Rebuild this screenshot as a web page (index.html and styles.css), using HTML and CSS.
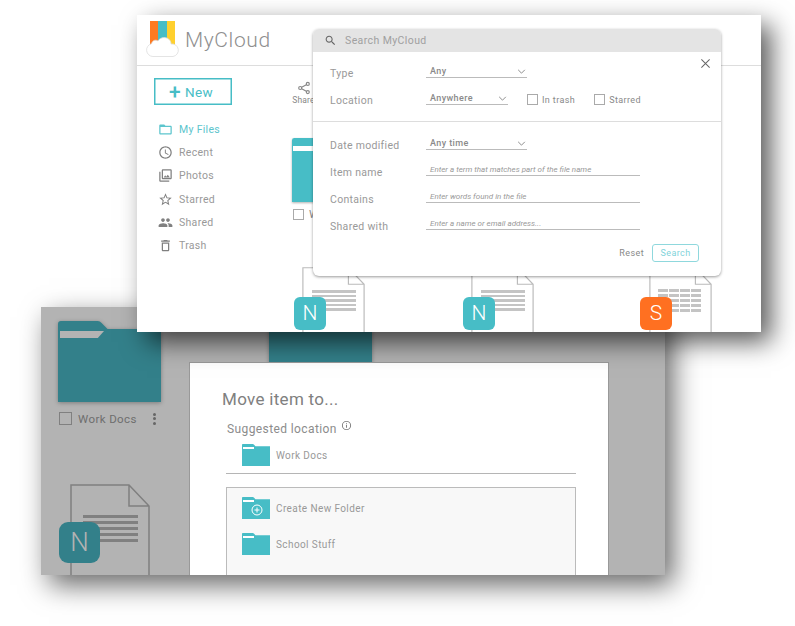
FILE: index.html
```html
<!DOCTYPE html>
<html lang="en">
<head>
  <meta charset="UTF-8">
  <title>MyCloud</title>
  <link rel="stylesheet" href="styles.css">
</head>
<body>

<svg class="defs" width="0" height="0">
  <symbol id="folder" viewBox="0 0 104 81" preserveAspectRatio="none">
    <path d="M0 3a3 3 0 0 1 3-3h36a6 6 0 0 1 5 2l6 6h54v73H0z" fill="currentColor"/>
  </symbol>
  <symbol id="doc" viewBox="0 0 80 130">
    <path d="M1 130V1h58l20 21v108M59 1v21h20" fill="none" stroke="currentColor" stroke-width="1.5"/>
  </symbol>
</svg>

<!-- back window: move dialog -->
<section class="window back">
  <div class="back-row">
    <div class="back-cell">
      <svg class="big-folder"><use href="#folder"/></svg>
      <span class="stripe"></span>
      <div class="back-caption">
        <span class="check"></span>
        <span>Work Docs</span>
        <span class="dots"><i></i><i></i><i></i></span>
      </div>
    </div>
    <div class="back-cell">
      <svg class="big-folder"><use href="#folder"/></svg>
    </div>
  </div>
  <div class="back-file">
    <svg class="doc"><use href="#doc"/></svg>
    <div class="lines"><i></i><i></i><i></i><i></i><i></i></div>
    <span class="badge">N</span>
  </div>

  <div class="modal">
    <h2>Move item to...</h2>
    <div class="suggested">
      Suggested location
      <svg class="info" viewBox="0 0 24 24"><path d="M11 7h2v2h-2zm0 4h2v6h-2zm1-9a10 10 0 1 0 0 20 10 10 0 0 0 0-20zm0 18a8 8 0 1 1 0-16 8 8 0 0 1 0 16z"/></svg>
    </div>
    <div class="loc-row first-loc">
      <span class="mini"><svg><use href="#folder"/></svg><span class="mini-stripe"></span></span>
      Work Docs
    </div>
    <div class="loc-box">
      <div class="loc-row">
        <span class="mini">
          <svg><use href="#folder"/></svg><span class="mini-stripe"></span>
          <svg class="plus" viewBox="0 0 24 24"><circle cx="12" cy="12" r="10" fill="none" stroke="#fff" stroke-width="2"/><path d="M12 7v10M7 12h10" stroke="#fff" stroke-width="2"/></svg>
        </span>
        Create New Folder
      </div>
      <div class="loc-row">
        <span class="mini"><svg><use href="#folder"/></svg><span class="mini-stripe"></span></span>
        School Stuff
      </div>
    </div>
  </div>
</section>

<!-- front window: file list with search -->
<section class="window front">
  <header class="topbar">
    <div class="logo">
      <span class="band orange"></span><span class="band teal"></span><span class="band yellow"></span>
      <svg class="cloud" viewBox="0 0 34 21"><path d="M7 20.500a6.500 6.500 0 0 1-1.500-12.800C6.500 4 10 3.500 12 5c2-4 9-5 12-.5 1 1.500 1 3 1 3.500a6.300 6.300 0 0 1 2 12.500z" fill="#fff" stroke="#ddd" stroke-width=".8"/></svg>
    </div>
    <span class="brand">MyCloud</span>
  </header>

  <div class="content">
    <aside class="sidebar">
      <button class="new-btn"><span class="new-plus">+</span> New</button>
      <nav class="nav">
        <a class="active"><svg viewBox="0 0 24 24"><path d="M20 6h-8l-2-2H4c-1.100 0-2 .9-2 2v12c0 1.100.9 2 2 2h16c1.100 0 2-.9 2-2V8c0-1.100-.9-2-2-2zm0 12H4V8h16v10z"/></svg>My Files</a>
        <a><svg viewBox="0 0 24 24"><path d="M11.990 2C6.470 2 2 6.480 2 12s4.470 10 9.990 10C17.520 22 22 17.520 22 12S17.520 2 11.990 2zM12 20c-4.420 0-8-3.580-8-8s3.580-8 8-8 8 3.580 8 8-3.580 8-8 8zm.5-13H11v6l5.250 3.150.75-1.230-4.500-2.670z"/></svg>Recent</a>
        <a><svg viewBox="0 0 24 24"><path d="M20 4v12H8V4h12m0-2H8c-1.100 0-2 .9-2 2v12c0 1.100.9 2 2 2h12c1.100 0 2-.9 2-2V4c0-1.100-.9-2-2-2zm-8.500 9.670l1.690 2.260 2.480-3.100L19 15H9zM2 6v14c0 1.100.9 2 2 2h14v-2H4V6H2z"/></svg>Photos</a>
        <a><svg viewBox="0 0 24 24"><path d="M22 9.240l-7.190-.62L12 2 9.190 8.630 2 9.240l5.460 4.730L5.820 21 12 17.270 18.180 21l-1.630-7.030L22 9.240zM12 15.400l-3.760 2.270 1-4.280-3.320-2.880 4.380-.38L12 6.100l1.710 4.040 4.380.38-3.320 2.880 1 4.280L12 15.400z"/></svg>Starred</a>
        <a><svg viewBox="0 0 24 24"><path d="M16 11c1.660 0 2.990-1.340 2.990-3S17.660 5 16 5c-1.660 0-3 1.340-3 3s1.340 3 3 3zm-8 0c1.660 0 2.990-1.340 2.990-3S9.660 5 8 5 5 6.340 5 8s1.340 3 3 3zm0 2c-2.330 0-7 1.170-7 3.500V19h14v-2.500c0-2.330-4.670-3.500-7-3.500zm8 0c-.29 0-.62.02-.97.05 1.160.84 1.970 1.970 1.970 3.450V19h6v-2.500c0-2.330-4.670-3.500-7-3.500z"/></svg>Shared</a>
        <a><svg viewBox="0 0 24 24"><path d="M6 19c0 1.100.9 2 2 2h8c1.100 0 2-.9 2-2V7H6v12zM8 9h8v10H8V9zm7.500-5l-1-1h-5l-1 1H5v2h14V4z"/></svg>Trash</a>
      </nav>
    </aside>

    <main class="files">
      <div class="share">
        <svg viewBox="0 0 24 24"><g fill="none" stroke="#888" stroke-width="2"><circle cx="18.500" cy="5" r="2.600"/><circle cx="5.500" cy="12" r="2.600"/><circle cx="18.500" cy="19" r="2.600"/><path d="M8 10.700l8-4.400M8 13.300l8 4.400"/></g></svg>
        <span>Share</span>
      </div>
      <div class="front-folder">
        <svg><use href="#folder"/></svg>
        <span class="front-stripe"></span>
      </div>
      <div class="front-caption"><span class="check"></span><span>Work Docs</span></div>
      <div class="file-row">
        <div class="file">
          <svg class="doc"><use href="#doc"/></svg>
          <div class="lines"><i></i><i></i><i></i><i></i><i></i></div>
          <span class="badge">N</span>
        </div>
        <div class="file">
          <svg class="doc"><use href="#doc"/></svg>
          <div class="lines"><i></i><i></i><i></i><i></i><i></i></div>
          <span class="badge">N</span>
        </div>
        <div class="file">
          <svg class="doc"><use href="#doc"/></svg>
          <div class="sheet"><i></i><i></i><i></i><i></i><i></i><i></i><i></i><i></i><i></i><i></i><i></i><i></i><i></i><i></i><i></i><i></i><i></i><i></i><i></i><i></i></div>
          <span class="badge orange-badge">S</span>
        </div>
      </div>
    </main>
  </div>

  <div class="search-panel">
    <div class="search-head">
      <svg viewBox="0 0 24 24"><path d="M15.500 14h-.79l-.28-.27C15.410 12.590 16 11.110 16 9.500 16 5.910 13.090 3 9.500 3S3 5.910 3 9.500 5.910 16 9.500 16c1.610 0 3.090-.59 4.230-1.570l.27.28v.79l5 4.990L20.490 19l-4.990-5zm-6 0C7.010 14 5 11.990 5 9.500S7.010 5 9.500 5 14 7.010 14 9.500 11.990 14 9.500 14z"/></svg>
      <span>Search MyCloud</span>
    </div>
    <svg class="close" viewBox="0 0 12 12"><path d="M1.500 1.500l9 9M10.500 1.500l-9 9" stroke="#666" stroke-width="1.100" fill="none"/></svg>
    <div class="form-top">
      <div class="row">
        <label>Type</label>
        <div class="select wide">Any<svg class="chev" viewBox="0 0 10 6"><path d="M1 1l4 4 4-4" fill="none" stroke="#777" stroke-width="1"/></svg></div>
      </div>
      <div class="row">
        <label>Location</label>
        <div class="select narrow">Anywhere<svg class="chev" viewBox="0 0 10 6"><path d="M1 1l4 4 4-4" fill="none" stroke="#777" stroke-width="1"/></svg></div>
        <span class="opt"><span class="check small"></span>In trash</span>
        <span class="opt"><span class="check small"></span>Starred</span>
      </div>
    </div>
    <div class="form-bottom">
      <div class="row">
        <label>Date modified</label>
        <div class="select wide">Any time<svg class="chev" viewBox="0 0 10 6"><path d="M1 1l4 4 4-4" fill="none" stroke="#777" stroke-width="1"/></svg></div>
      </div>
      <div class="row">
        <label>Item name</label>
        <div class="field">Enter a term that matches part of the file name</div>
      </div>
      <div class="row">
        <label>Contains</label>
        <div class="field">Enter words found in the file</div>
      </div>
      <div class="row">
        <label>Shared with</label>
        <div class="field">Enter a name or email address...</div>
      </div>
      <div class="actions">
        <span class="reset">Reset</span>
        <span class="search-btn">Search</span>
      </div>
    </div>
  </div>
</section>

</body>
</html>
```

FILE: styles.css
```css
html, body { margin: 0; padding: 0; }
body { position: relative; width: 795px; height: 626px; overflow: hidden; background: #fff; font-family: Roboto, "Liberation Sans", sans-serif; letter-spacing: .4px; color: #999; }
.defs { position: absolute; }
i { display: block; }

.window { position: absolute; width: 624px; overflow: hidden; box-sizing: border-box; }

/* back window */
.back { left: 41px; top: 307px; height: 268px; background: #b3b3b3; box-shadow: 8px 10px 26px rgba(0,0,0,.6); color: #6e6e6e; }
.back-row { display: flex; padding: 14px 0 0 17px; }
.back-cell { position: relative; width: 211px; }
.big-folder { display: block; width: 103px; height: 81px; color: #33808a; filter: drop-shadow(0 1px 2px rgba(0,0,0,.3)); }
.stripe { position: absolute; left: 2px; top: 10px; width: 44px; height: 7px; background: #b3b3b3; clip-path: polygon(0 0, 100% 0, 86% 100%, 0 100%); }
.back-caption { display: flex; align-items: center; margin: 9px 0 0 1px; width: 100px; font-size: 11.500px; }
.back-caption .check { border-color: #808080; margin-right: 6px; }
.dots { margin-left: 16px; }
.dots i { width: 3px; height: 3px; margin: 1.500px 0; border-radius: 50%; background: #666; }
.check { display: inline-block; flex: none; box-sizing: border-box; width: 13px; height: 13px; border: 1px solid #aaa; }

.back-file { position: relative; width: 80px; height: 130px; margin: 58px 0 0 29px; color: #808080; }
.back-file .doc { display: block; width: 80px; height: 130px; }
.back-file .lines { position: absolute; left: 13px; top: 31px; width: 55px; }
.back-file .lines i { height: 3px; margin-bottom: 3px; background: #808080; }
.back-file .badge { left: -11px; top: 38px; width: 41px; height: 41px; border-radius: 9px; background: #33808a; color: #b3b3b3; font-size: 26px; line-height: 41px; }

.badge { position: absolute; text-align: center; font-weight: 300; letter-spacing: 0; }

.modal { position: absolute; left: 148px; top: 55px; width: 420px; height: 213px; box-sizing: border-box; padding: 25px 32px 0 32px; background: #fff; border: solid #999; border-width: 1px 1px 0 1px; color: #888; overflow: hidden; }
.modal h2 { margin: 0; font-size: 17px; line-height: 22px; font-weight: 400; color: #808080; letter-spacing: .3px; }
.suggested { display: flex; align-items: flex-start; margin: 12px 0 0 5px; font-size: 12px; line-height: 15px; color: #8c8c8c; }
.info { width: 11px; height: 11px; margin: -2px 0 0 4px; fill: #777; }
.loc-row { display: flex; align-items: center; font-size: 10px; color: #999; }
.mini { position: relative; width: 28px; height: 22px; margin-right: 6px; color: #47bdc6; }
.mini svg { display: block; width: 28px; height: 22px; }
.mini-stripe { position: absolute; left: 1px; top: 3px; width: 11px; height: 1.500px; background: #fff; }
.mini .plus { position: absolute; left: 9px; top: 7px; width: 12px; height: 12px; }
.first-loc { width: 350px; margin: 7px 0 0 4px; padding: 0 0 7px 16px; box-sizing: border-box; border-bottom: 1px solid #b5b5b5; }
.loc-box { width: 350px; height: 100px; box-sizing: border-box; margin: 13px 0 0 4px; padding: 9px 0 0 15px; display: flex; flex-direction: column; gap: 14px; background: #f8f8f8; border: 1px solid #bbb; }

/* front window */
.front { left: 137px; top: 15px; height: 317px; background: #fff; box-shadow: 10px 10px 24px rgba(0,0,0,.65); }
.topbar { display: flex; align-items: center; height: 51px; box-sizing: border-box; border-bottom: 1px solid #ddd; padding-left: 48px; }
.logo { position: absolute; left: 9px; top: 6px; width: 34px; height: 36px; display: flex; padding-left: 4px; box-sizing: border-box; }
.band { width: 8.400px; height: 26px; }
.orange { background: #ff7a21; }
.teal { background: #47bdc6; }
.yellow { background: #ffd02e; }
.cloud { position: absolute; left: 0; top: 15px; width: 34px; height: 21px; }
.brand { font-size: 21px; font-weight: 300; color: #8f8f8f; letter-spacing: .6px; }

.content { display: flex; }
.sidebar { width: 155px; padding: 12px 0 0 17px; box-sizing: border-box; }
.new-btn { display: flex; align-items: center; justify-content: center; width: 78px; height: 27px; padding: 0 4px 0 0; background: #fff; border: 1px solid #47bdc6; box-shadow: inset 0 0 0 .5px #47bdc6; color: #47bdc6; font: 400 13.500px Roboto, sans-serif; letter-spacing: .4px; }
.new-plus { font-size: 21px; font-weight: 500; line-height: 20px; margin-right: 4px; }
.nav { margin-top: 13px; display: flex; flex-direction: column; }
.nav a { display: flex; align-items: center; height: 23.200px; padding-left: 4px; font-size: 10.500px; letter-spacing: .3px; color: #999; }
.nav svg { width: 15px; height: 15px; margin-right: 6px; fill: #808080; flex: none; }
.nav .active { color: #5cc5cd; }
.nav .active svg { fill: #5cc5cd; }

.files { flex: 1; position: relative; }
.share { display: flex; flex-direction: column; align-items: center; width: 23px; margin-top: 15px; font-size: 8.500px; color: #888; letter-spacing: .2px; }
.share svg { width: 14px; height: 14px; }
.front-folder { position: relative; width: 84px; height: 64px; margin-top: 33px; }
.front-folder svg { display: block; width: 84px; height: 64px; color: #47bdc6; filter: drop-shadow(0 1px 1px rgba(0,0,0,.3)); }
.front-stripe { position: absolute; left: 1px; top: 8px; width: 50px; height: 5px; background: #fff; }
.front-caption { display: flex; align-items: center; margin: 7px 0 0 1px; font-size: 11px; height: 11px; color: #888; }
.front-caption .check { width: 11px; height: 11px; margin-right: 5px; }
.file-row { display: grid; grid-template-columns: 169px 178px 63px; margin: 47px 0 0 10px; }
.file { position: relative; height: 65px; color: #bbb; }
.file .doc { position: absolute; left: 0; top: 0; width: 63px; height: 102px; }
.file .lines { position: absolute; left: 10px; top: 23px; width: 44px; }
.file .lines i { height: 2.500px; margin-bottom: 2px; background: #c4c4c4; }
.file .badge { left: -8px; top: 30px; width: 32px; height: 33px; border-radius: 6px; background: #47bdc6; color: #fff; font-size: 21px; line-height: 33px; }
.file .orange-badge { left: -9px; background: #ff7021; }
.sheet { position: absolute; left: 9px; top: 22px; width: 43px; display: grid; grid-template-columns: repeat(4, 1fr); gap: 2px 1px; }
.sheet i { height: 3px; background: #c4c4c4; }

/* search panel */
.search-panel { position: absolute; left: 176px; top: 14px; width: 408px; height: 247px; background: #fff; border-radius: 6px; box-shadow: 0 1px 3px rgba(0,0,0,.4); overflow: hidden; }
.search-head { display: flex; align-items: center; height: 23px; padding-left: 11px; background: #e4e4e4; font-size: 10.500px; color: #a0a0a0; }
.search-head svg { width: 13px; height: 13px; margin-right: 8px; fill: #666; }
.close { position: absolute; right: 10px; top: 29px; width: 11px; height: 11px; }
.form-top { height: 70px; box-sizing: border-box; padding-top: 3px; border-bottom: 1px solid #ddd; }
.form-bottom { padding-top: 5px; }
.row { display: flex; align-items: flex-end; height: 27px; padding-left: 17px; box-sizing: border-box; padding-bottom: 1px; }
label { width: 96px; flex: none; font-size: 10.500px; line-height: 14px; letter-spacing: .3px; color: #999; }
.select { position: relative; box-sizing: border-box; height: 13px; padding-left: 4px; font-size: 9px; font-weight: 500; line-height: 12px; color: #8a8a8a; border-bottom: 1px solid #bbb; margin-bottom: 3px; }
.select.wide { width: 101px; }
.select.narrow { width: 82px; }
.chev { position: absolute; right: 1px; top: 4px; width: 9px; height: 5px; }
.opt { display: flex; align-items: center; margin: 0 0 2px 19px; font-size: 9px; color: #888; height: 13px; }
.opt + .opt { margin-left: 19px; }
.check.small { width: 11px; height: 11px; margin-right: 4px; }
.field { box-sizing: border-box; width: 214px; height: 12px; padding-left: 4px; font-size: 8px; font-style: italic; line-height: 12px; color: #999; letter-spacing: 0; border-bottom: 1px solid #bbb; margin-bottom: 4px; }
.actions { display: flex; align-items: center; justify-content: flex-end; gap: 8px; margin-top: 9px; padding-right: 22px; }
.reset { font-size: 9px; color: #888; }
.search-btn { box-sizing: border-box; width: 47px; height: 18px; text-align: center; font-size: 9px; line-height: 16px; color: #7fd3da; border: 1px solid #8fd8dd; border-radius: 3px; }
```
